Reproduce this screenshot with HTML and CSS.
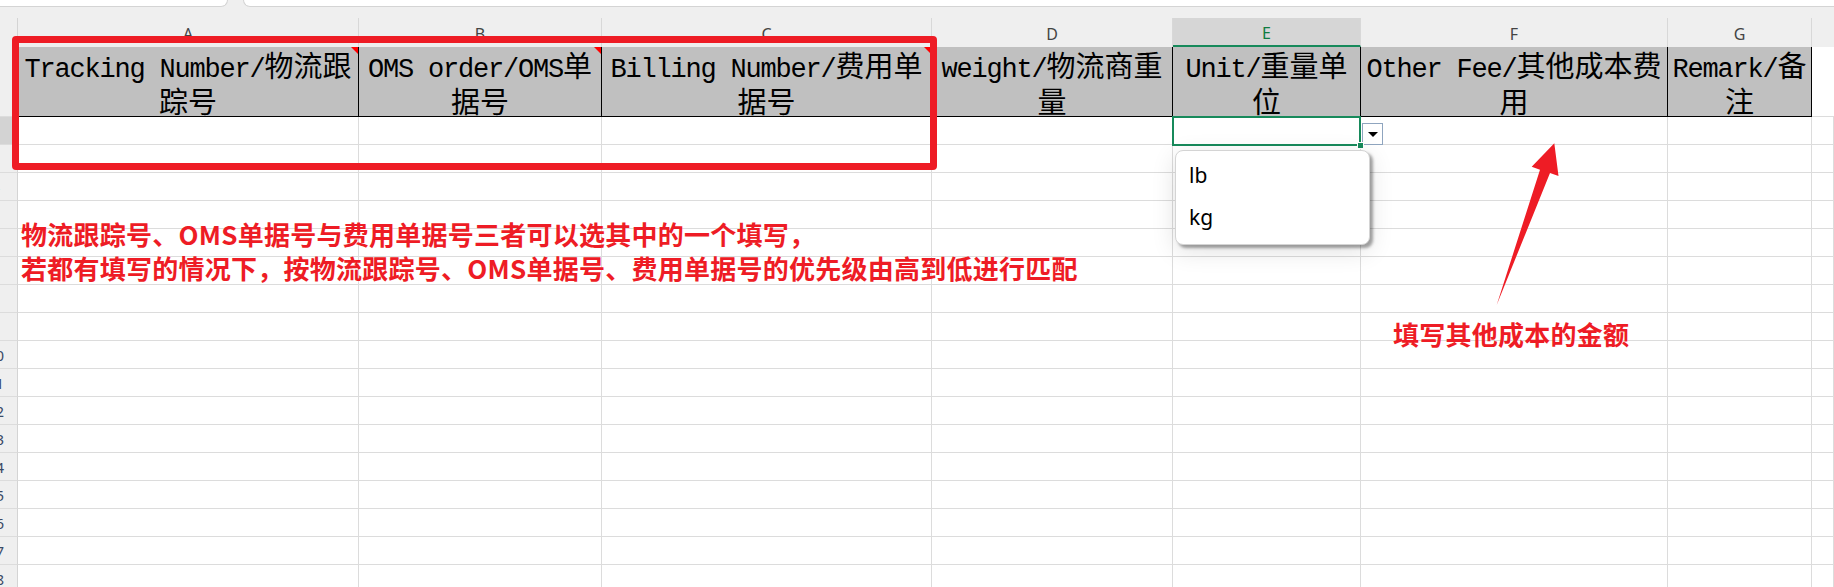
FILE: index.html
```html
<!DOCTYPE html>
<html lang="zh-CN">
<head>
<meta charset="UTF-8">
<meta name="viewport" content="width=device-width, initial-scale=1.0">
<title>Other Fee Import</title>
<link rel="stylesheet" href="styles.css">
</head>
<body>

<div class="tabs">
  <div class="tab tab-first"></div>
  <div class="tab tab-rest"></div>
</div>
<div class="band"></div>

<div class="sheet" id="sheet">
  <!-- column letters -->
  <div class="corner"></div>
  <div class="col">A</div>
  <div class="col">B</div>
  <div class="col">C</div>
  <div class="col">D</div>
  <div class="col sel">E</div>
  <div class="col">F</div>
  <div class="col">G</div>
  <div class="col last"></div>

  <!-- row 1: template headers -->
  <div class="rh"><span>1</span></div>
  <div class="hd has-note">Tracking Number/<span class="zh">物流跟</span><br><span class="zh">踪号</span></div>
  <div class="hd has-note">OMS order/OMS<span class="zh">单</span><br><span class="zh">据号</span></div>
  <div class="hd has-note">Billing Number/<span class="zh">费用单</span><br><span class="zh">据号</span></div>
  <div class="hd">weight/<span class="zh">物流商重</span><br><span class="zh">量</span></div>
  <div class="hd">Unit/<span class="zh">重量单</span><br><span class="zh">位</span></div>
  <div class="hd">Other Fee/<span class="zh">其他成本费</span><br><span class="zh">用</span></div>
  <div class="hd">Remark/<span class="zh">备</span><br><span class="zh">注</span></div>
  <div class="c blank"></div>

  <!-- row 2 holds the active cell with its list -->
  <div class="rh cur"><span>2</span></div>
  <div class="c"></div>
  <div class="c"></div>
  <div class="c"></div>
  <div class="c"></div>
  <div class="c active">
    <div class="dd-btn"></div>
    <div class="dd-list">
      <div class="dd-item">lb</div>
      <div class="dd-item">kg</div>
    </div>
  </div>
  <div class="c"></div>
  <div class="c"></div>
  <div class="c"></div>

  <!-- notes drawn over the sheet -->
  <div class="mark-box"></div>
  <div class="tip tip-keys">物流跟踪号、OMS单据号与费用单据号三者可以选其中的一个填写，<br>若都有填写的情况下，按物流跟踪号、OMS单据号、费用单据号的优先级由高到低进行匹配</div>
  <svg class="arrow" width="75" height="170" viewBox="0 0 75 170">
    <polygon points="64.3,3.3 68.5,36 60,33 6.7,165 50,29.7 41.7,26.7" fill="#ee1c25"/>
  </svg>
  <div class="tip tip-fee">填写其他成本的金额</div>
</div>

<script>
// empty rows under the header, numbered 3..18
var sheet = document.getElementById("sheet");
for (var r = 3; r <= 18; r++) {
  var head = document.createElement("div");
  head.className = "rh";
  head.innerHTML = "<span>" + r + "</span>";
  sheet.appendChild(head);
  for (var c = 0; c < 8; c++) {
    var cell = document.createElement("div");
    cell.className = "c";
    sheet.appendChild(cell);
  }
}
</script>

</body>
</html>
```

FILE: styles.css
```css
body {
  margin: 0;
  overflow: hidden;
  background-color: #fff;
  font-family: "Noto Sans", "Noto Sans CJK SC", sans-serif;
}

/* workbook tabs strip */
.tabs {
  display: flex;
  height: 7px;
  background-color: #efefef;
}

.tab {
  box-sizing: border-box;
  background-color: #fff;
  border-bottom: 1px solid #d4d4d4;
}

.tab-first {
  width: 228px;
  border-right: 1px solid #d4d4d4;
  border-bottom-right-radius: 8px;
}

.tab-rest {
  flex: 1;
  margin-left: 15px;
  border-left: 1px solid #d4d4d4;
  border-bottom-left-radius: 8px;
}

.band {
  height: 11px;
  background-color: #efefef;
}

/* grid */
.sheet {
  position: relative;
  display: grid;
  grid-template-columns: 18px 341px 243px 330px 241px 188px 307px 144px 1fr;
  grid-template-rows: 29px 70px;
  grid-auto-rows: 28px;
}

.sheet > div {
  box-sizing: border-box;
}

.corner {
  background-color: #efefef;
  border-right: 1px solid #d4d4d4;
}

.col {
  display: flex;
  align-items: center;
  justify-content: center;
  padding-top: 3px;
  background-color: #efefef;
  border-right: 1px solid #d8d8d8;
  font-size: 16px;
  color: #444;
}

.col.sel {
  background-color: #d6d6d6;
  color: #107c41;
  border-bottom: 2px solid #178a5b;
}

.col.last {
  border-right: none;
}

/* row numbers, only the right edge of the column is on screen */
.rh {
  overflow: hidden;
  background-color: #efefef;
  border-right: 1px solid #d4d4d4;
  border-bottom: 1px solid #dcdcdc;
  font-size: 15px;
  color: #3a4a66;
}

.rh span {
  display: block;
  width: 43px;
  margin-left: -26px;
  text-align: center;
  line-height: 28px;
}

.rh.cur {
  background-color: #d3d3d3;
}

/* header row */
.hd {
  position: relative;
  padding-top: 5px;
  background-color: #c0c0c0;
  border-right: 1px solid #000;
  border-bottom: 1px solid #000;
  font-family: "Liberation Mono", "Noto Sans CJK SC", monospace;
  font-size: 27px;
  letter-spacing: -1.2px;
  line-height: 36px;
  text-align: center;
  white-space: nowrap;
  color: #000;
}

.zh {
  font-family: "Noto Sans CJK SC", sans-serif;
  font-size: 29px;
  letter-spacing: 0;
  line-height: 20px;
}

.has-note::after {
  content: "";
  position: absolute;
  top: 0;
  right: 0;
  border-top: 7px solid #ff0000;
  border-left: 7px solid transparent;
}

.c {
  border-right: 1px solid #dcdcdc;
  border-bottom: 1px solid #dcdcdc;
}

.c.blank {
  border-right: none;
}

/* selected cell + list validation */
.c.active {
  position: relative;
}

.c.active::before {
  content: "";
  position: absolute;
  left: -1px;
  top: -1px;
  right: -1px;
  bottom: -2px;
  border: 2px solid #178a5b;
}

.c.active::after {
  content: "";
  position: absolute;
  right: -4px;
  bottom: -5px;
  width: 5px;
  height: 5px;
  background-color: #178a5b;
  border: 1px solid #fff;
}

.dd-btn {
  position: absolute;
  left: 189px;
  top: 6px;
  width: 21px;
  height: 22px;
  box-sizing: border-box;
  background-color: #fff;
  border: 1px solid #8fa5bf;
}

.dd-btn::after {
  content: "";
  position: absolute;
  left: 5px;
  top: 8px;
  border-top: 5px solid #000;
  border-left: 5px solid transparent;
  border-right: 5px solid transparent;
}

.dd-list {
  position: absolute;
  left: 2px;
  top: 33px;
  z-index: 2;
  width: 195px;
  box-sizing: border-box;
  padding: 3px 0 6px;
  background-color: #fff;
  border: 1px solid #d4d4d4;
  border-radius: 8px;
  box-shadow: 3px 3px 3px rgba(0, 0, 0, 0.35), 0 6px 24px rgba(0, 0, 0, 0.12);
  font-size: 21px;
  color: #000;
}

.dd-item {
  line-height: 42px;
  padding-left: 13px;
}

/* red annotations */
.mark-box {
  position: absolute;
  left: 12px;
  top: 18px;
  width: 925px;
  height: 134px;
  box-sizing: border-box;
  border: 7px solid #ee1c25;
  border-radius: 4px;
}

.tip {
  position: absolute;
  font-family: "Noto Sans CJK SC", sans-serif;
  font-weight: 700;
  font-size: 26px;
  letter-spacing: 0.25px;
  line-height: 34px;
  color: #ee1c25;
  white-space: nowrap;
}

.tip-keys {
  left: 21px;
  top: 199px;
}

.tip-fee {
  left: 1393px;
  top: 299px;
}

.arrow {
  position: absolute;
  left: 1490px;
  top: 122px;
}
```
